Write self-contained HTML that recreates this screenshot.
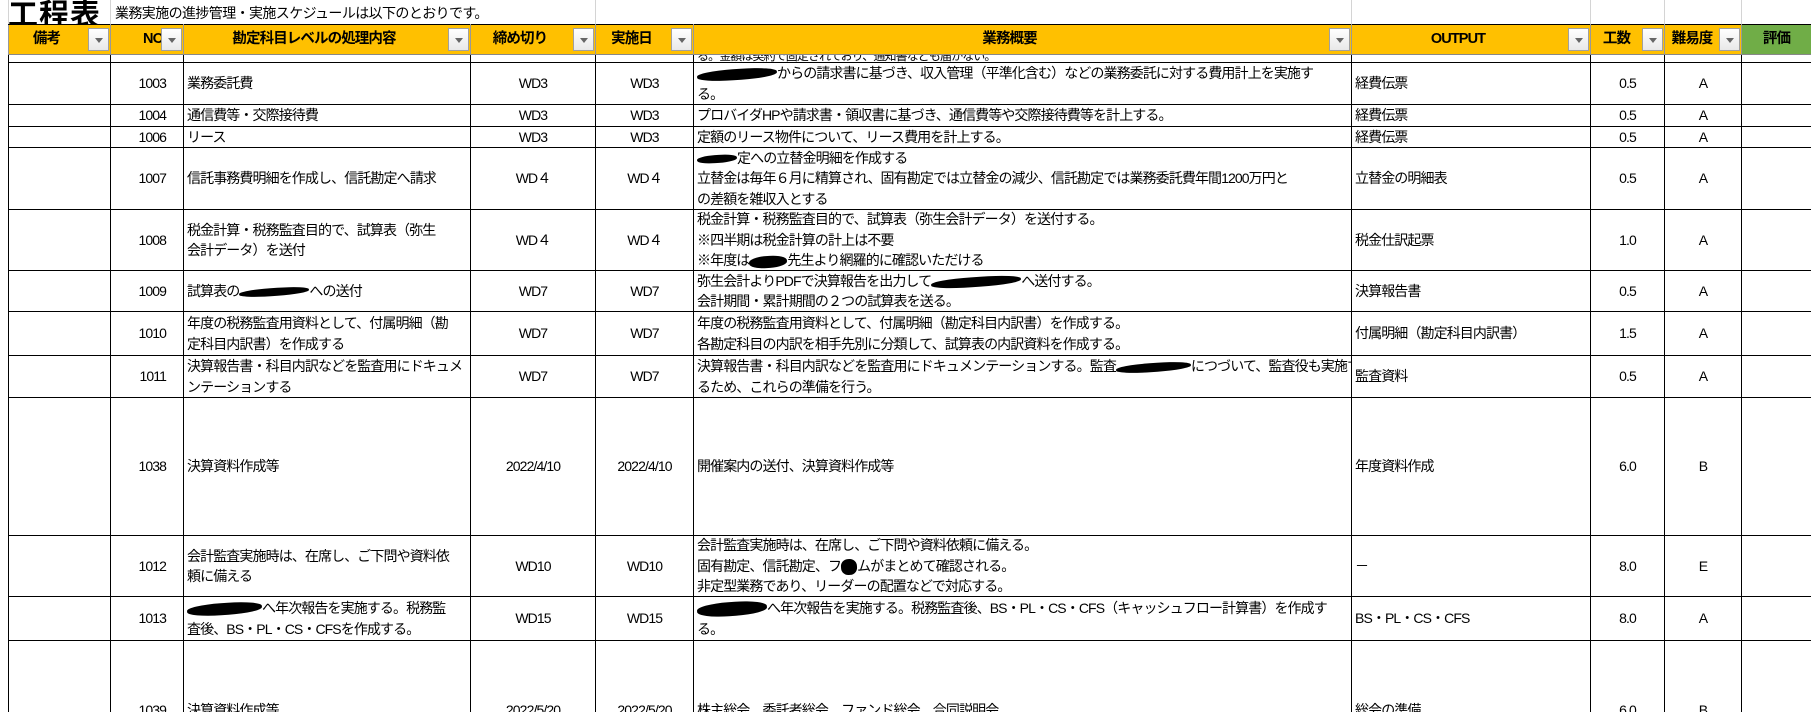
<!DOCTYPE html>
<html><head><meta charset="utf-8">
<style>
html,body{margin:0;padding:0;background:#fff;width:1811px;height:712px;overflow:hidden;position:relative}
body{font-family:"Liberation Sans","Noto Sans CJK JP",sans-serif;color:#000}
.title{position:absolute;left:8px;top:-10px;font-size:30px;font-weight:bold;letter-spacing:1px}
.sub{position:absolute;left:115px;top:3px;font-size:14px;letter-spacing:-0.6px}
.gl{position:absolute;top:0;height:24px;width:1px;background:#d4d4d4}
table{position:absolute;left:8px;top:24px;width:1803px;border-collapse:collapse;table-layout:fixed;font-size:14px;letter-spacing:-0.9px}
td{border:1.5px solid #000;padding:0;overflow:hidden;white-space:nowrap;vertical-align:middle}
td>div{display:flex;flex-direction:column;justify-content:center;overflow:hidden;padding:0 3px;line-height:20.5px}
tr.h td{background:#ffc000;font-weight:bold;font-size:14.5px;border:1px solid #999;border-top:1.5px solid #000;border-bottom:1.5px solid #888;height:29px}
tr.h td>div{position:relative;height:29px;text-align:center;align-items:center;padding:0 26px 0 0}
tr.h td.g{background:#70ad47}
.dd{position:absolute;right:1px;top:3px;width:21px;height:23px;background:linear-gradient(#fff,#e8e8e8);border:1px solid #a0a0a0;box-sizing:border-box}
.dd:after{content:"";position:absolute;left:6px;top:9px;border-left:4px solid transparent;border-right:4px solid transparent;border-top:5px solid #666}
.c>div{text-align:center;align-items:center}.r>div{align-items:flex-end;padding-right:17px}
.b{display:inline-block;background:#000;border-radius:45%;height:11px;vertical-align:middle;transform:rotate(-4deg)}
</style></head><body>
<div class="gl" style="left:8px"></div><div class="gl" style="left:110px"></div><div class="gl" style="left:595px"></div><div class="gl" style="left:1351px"></div><div class="gl" style="left:1590px"></div><div class="gl" style="left:1664px"></div><div class="gl" style="left:1741px"></div>
<div class="title">工程表</div>
<div class="sub">業務実施の進捗管理・実施スケジュールは以下のとおりです。</div>
<table>
<colgroup><col style="width:102px"><col style="width:73px"><col style="width:287px"><col style="width:125px"><col style="width:98px"><col style="width:658px"><col style="width:239px"><col style="width:74px"><col style="width:77px"><col style="width:70px"></colgroup>
<tr class="h"><td><div>備考<span class="dd"></span></div></td><td><div style="align-items:flex-end;padding-right:20px">NO<span class="dd"></span></div></td><td><div>勘定科目レベルの処理内容<span class="dd"></span></div></td><td><div>締め切り<span class="dd"></span></div></td><td><div>実施日<span class="dd"></span></div></td><td><div>業務概要<span class="dd"></span></div></td><td><div>OUTPUT<span class="dd"></span></div></td><td><div style="padding-right:22px">工数<span class="dd"></span></div></td><td><div style="padding-right:22px">難易度<span class="dd"></span></div></td><td class="g"><div style="padding:0">評価</div></td></tr>
<tr><td><div style="height:7px"></div></td><td></td><td></td><td></td><td></td><td><div style="height:7px;justify-content:flex-end;font-size:12px;line-height:12px">る。金額は契約で固定されており、通知書なども届かない。</div></td><td></td><td></td><td></td><td></td></tr>
<tr><td><div style="height:41px"></div></td><td class="r"><div>1003</div></td><td><div>業務委託費</div></td><td class="c"><div>WD3</div></td><td class="c"><div>WD3</div></td><td><div style="height:41px"><span><span class="b" style="width:80px"></span>からの請求書に基づき、収入管理（平準化含む）などの業務委託に対する費用計上を実施す</span><span>る。</span></div></td><td><div>経費伝票</div></td><td class="c"><div>0.5</div></td><td class="c"><div>A</div></td><td></td></tr>
<tr><td><div style="height:20px"></div></td><td class="r"><div>1004</div></td><td><div>通信費等・交際接待費</div></td><td class="c"><div>WD3</div></td><td class="c"><div>WD3</div></td><td><div>プロバイダHPや請求書・領収書に基づき、通信費等や交際接待費等を計上する。</div></td><td><div>経費伝票</div></td><td class="c"><div>0.5</div></td><td class="c"><div>A</div></td><td></td></tr>
<tr><td><div style="height:19px"></div></td><td class="r"><div>1006</div></td><td><div>リース</div></td><td class="c"><div>WD3</div></td><td class="c"><div>WD3</div></td><td><div style="height:19px">定額のリース物件について、リース費用を計上する。</div></td><td><div>経費伝票</div></td><td class="c"><div>0.5</div></td><td class="c"><div>A</div></td><td></td></tr>
<tr><td><div style="height:61px"></div></td><td class="r"><div>1007</div></td><td><div>信託事務費明細を作成し、信託勘定へ請求</div></td><td class="c"><div>WD４</div></td><td class="c"><div>WD４</div></td><td><div style="height:61px"><span><span class="b" style="width:40px;height:8px"></span>定への立替金明細を作成する</span><span>立替金は毎年６月に精算され、固有勘定では立替金の減少、信託勘定では業務委託費年間1200万円と</span><span>の差額を雑収入とする</span></div></td><td><div>立替金の明細表</div></td><td class="c"><div>0.5</div></td><td class="c"><div>A</div></td><td></td></tr>
<tr><td><div style="height:60px"></div></td><td class="r"><div>1008</div></td><td><div><span>税金計算・税務監査目的で、試算表（弥生</span><span>会計データ）を送付</span></div></td><td class="c"><div>WD４</div></td><td class="c"><div>WD４</div></td><td><div style="height:60px"><span>税金計算・税務監査目的で、試算表（弥生会計データ）を送付する。</span><span>※四半期は税金計算の計上は不要</span><span>※年度は<span class="b" style="width:38px;height:12px"></span>先生より網羅的に確認いただける</span></div></td><td><div>税金仕訳起票</div></td><td class="c"><div>1.0</div></td><td class="c"><div>A</div></td><td></td></tr>
<tr><td><div style="height:40px"></div></td><td class="r"><div>1009</div></td><td><div><span>試算表の<span class="b" style="width:70px;height:8px"></span>への送付</span></div></td><td class="c"><div>WD7</div></td><td class="c"><div>WD7</div></td><td><div style="height:40px"><span>弥生会計よりPDFで決算報告を出力して<span class="b" style="width:90px;height:10px"></span>へ送付する。</span><span>会計期間・累計期間の２つの試算表を送る。</span></div></td><td><div>決算報告書</div></td><td class="c"><div>0.5</div></td><td class="c"><div>A</div></td><td></td></tr>
<tr><td><div style="height:43px"></div></td><td class="r"><div>1010</div></td><td><div><span>年度の税務監査用資料として、付属明細（勘</span><span>定科目内訳書）を作成する</span></div></td><td class="c"><div>WD7</div></td><td class="c"><div>WD7</div></td><td><div style="height:43px"><span>年度の税務監査用資料として、付属明細（勘定科目内訳書）を作成する。</span><span>各勘定科目の内訳を相手先別に分類して、試算表の内訳資料を作成する。</span></div></td><td><div>付属明細（勘定科目内訳書）</div></td><td class="c"><div>1.5</div></td><td class="c"><div>A</div></td><td></td></tr>
<tr><td><div style="height:40px"></div></td><td class="r"><div>1011</div></td><td><div><span>決算報告書・科目内訳などを監査用にドキュメ</span><span>ンテーションする</span></div></td><td class="c"><div>WD7</div></td><td class="c"><div>WD7</div></td><td><div style="height:40px"><span>決算報告書・科目内訳などを監査用にドキュメンテーションする。監査<span class="b" style="width:75px;height:9px"></span>につづいて、監査役も実施す</span><span>るため、これらの準備を行う。</span></div></td><td><div>監査資料</div></td><td class="c"><div>0.5</div></td><td class="c"><div>A</div></td><td></td></tr>
<tr><td><div style="height:137px"></div></td><td class="r"><div>1038</div></td><td><div>決算資料作成等</div></td><td class="c"><div>2022/4/10</div></td><td class="c"><div>2022/4/10</div></td><td><div>開催案内の送付、決算資料作成等</div></td><td><div>年度資料作成</div></td><td class="c"><div>6.0</div></td><td class="c"><div>B</div></td><td></td></tr>
<tr><td><div style="height:60px"></div></td><td class="r"><div>1012</div></td><td><div><span>会計監査実施時は、在席し、ご下問や資料依</span><span>頼に備える</span></div></td><td class="c"><div>WD10</div></td><td class="c"><div>WD10</div></td><td><div style="height:60px"><span>会計監査実施時は、在席し、ご下問や資料依頼に備える。</span><span>固有勘定、信託勘定、フ<span class="b" style="width:16px;height:16px"></span>ムがまとめて確認される。</span><span>非定型業務であり、リーダーの配置などで対応する。</span></div></td><td><div>－</div></td><td class="c"><div>8.0</div></td><td class="c"><div>E</div></td><td></td></tr>
<tr><td><div style="height:43px"></div></td><td class="r"><div>1013</div></td><td><div><span><span class="b" style="width:75px;height:12px"></span>へ年次報告を実施する。税務監</span><span>査後、BS・PL・CS・CFSを作成する。</span></div></td><td class="c"><div>WD15</div></td><td class="c"><div>WD15</div></td><td><div style="height:43px"><span><span class="b" style="width:70px;height:14px"></span>へ年次報告を実施する。税務監査後、BS・PL・CS・CFS（キャッシュフロー計算書）を作成す</span><span>る。</span></div></td><td><div>BS・PL・CS・CFS</div></td><td class="c"><div>8.0</div></td><td class="c"><div>A</div></td><td></td></tr>
<tr><td><div style="height:138px"></div></td><td class="r"><div>1039</div></td><td><div>決算資料作成等</div></td><td class="c"><div>2022/5/20</div></td><td class="c"><div>2022/5/20</div></td><td><div>株主総会、委託者総会、ファンド総会、合同説明会</div></td><td><div>総会の準備</div></td><td class="c"><div>6.0</div></td><td class="c"><div>B</div></td><td></td></tr>
</table>
</body></html>
